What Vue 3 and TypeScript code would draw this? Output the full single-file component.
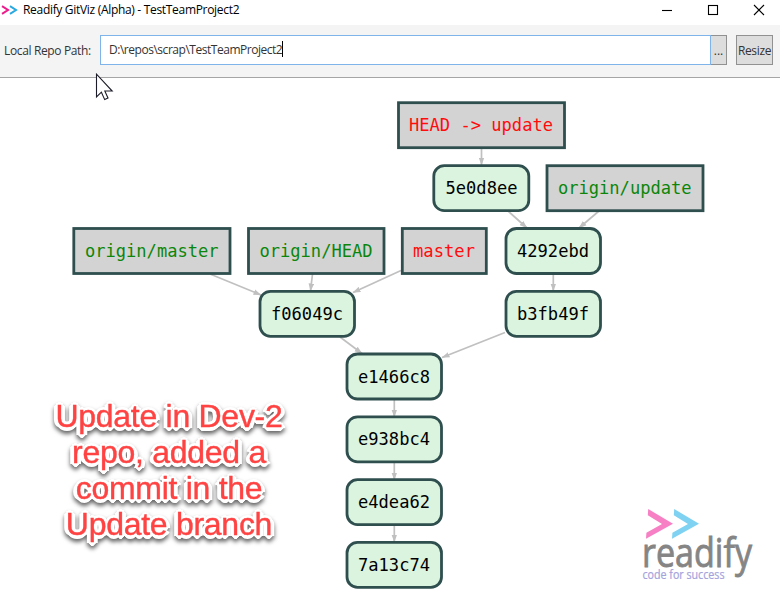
<script setup lang="ts">
type Kind = 'commit' | 'local' | 'remote'

interface GraphNode {
  label: string
  kind: Kind
  x: number
  y: number
  w: number
  textX: number
  textW: number
}

interface Edge {
  x1: number
  y1: number
  x2: number
  y2: number
}

const NODE_H = 45

const nodes: GraphNode[] = [
  { label: 'HEAD -> update', kind: 'local', x: 398.5, y: 102.7, w: 166, textX: 409, textW: 144 },
  { label: '5e0d8ee', kind: 'commit', x: 433.8, y: 165.7, w: 95, textX: 445.5, textW: 72 },
  { label: 'origin/update', kind: 'remote', x: 547, y: 165.7, w: 156, textX: 558, textW: 133.5 },
  { label: 'origin/master', kind: 'remote', x: 73.8, y: 228.5, w: 156.2, textX: 85, textW: 133.5 },
  { label: 'origin/HEAD', kind: 'remote', x: 248.5, y: 228.5, w: 135.5, textX: 259.5, textW: 113 },
  { label: 'master', kind: 'local', x: 402.3, y: 228.5, w: 84, textX: 413, textW: 62 },
  { label: '4292ebd', kind: 'commit', x: 506, y: 228.5, w: 94.5, textX: 517, textW: 72 },
  { label: 'f06049c', kind: 'commit', x: 260, y: 291.3, w: 94.5, textX: 271, textW: 72 },
  { label: 'b3fb49f', kind: 'commit', x: 506, y: 291.3, w: 94.5, textX: 517, textW: 72 },
  { label: 'e1466c8', kind: 'commit', x: 347, y: 354, w: 94.5, textX: 358, textW: 72 },
  { label: 'e938bc4', kind: 'commit', x: 347, y: 416.8, w: 94.5, textX: 358, textW: 72 },
  { label: 'e4dea62', kind: 'commit', x: 347, y: 479.6, w: 94.5, textX: 358, textW: 72 },
  { label: '7a13c74', kind: 'commit', x: 347, y: 542.4, w: 94.5, textX: 358, textW: 72 },
]

const edges: Edge[] = [
  { x1: 481.5, y1: 148, x2: 481.5, y2: 165 },
  { x1: 508, y1: 211, x2: 527, y2: 228 },
  { x1: 599, y1: 211, x2: 579, y2: 228 },
  { x1: 553.3, y1: 274, x2: 553.3, y2: 291 },
  { x1: 210, y1: 274, x2: 261, y2: 295 },
  { x1: 312.5, y1: 274, x2: 310.5, y2: 291 },
  { x1: 401, y1: 270.5, x2: 353, y2: 292.5 },
  { x1: 340, y1: 337, x2: 362, y2: 353.5 },
  { x1: 505, y1: 332.5, x2: 442, y2: 357.5 },
  { x1: 394.3, y1: 399, x2: 394.3, y2: 417 },
  { x1: 394.3, y1: 462, x2: 394.3, y2: 480 },
  { x1: 394.3, y1: 525, x2: 394.3, y2: 542 },
]

const noteLines: string[] = ['Update in Dev-2', 'repo, added a', 'commit in the', 'Update branch']
</script>

<template>
  <div class="window">
    <header class="titlebar">
      <svg class="app-icon" width="17" height="10" viewBox="0 0 17 10">
        <path d="M1 1.2 7 5 1 8.8" fill="none" stroke="#ec1c8c" stroke-width="2" />
        <path d="M9 1.2 15 5 9 8.8" fill="none" stroke="#29a9df" stroke-width="2" />
      </svg>
      <span class="title">Readify GitViz (Alpha) - TestTeamProject2</span>
      <div class="controls">
        <svg width="12" height="12" viewBox="0 0 12 12"><path d="M1 6.5H11" /></svg>
        <svg width="12" height="12" viewBox="0 0 12 12"><rect x="1.5" y="1.5" width="9" height="9" /></svg>
        <svg width="12" height="12" viewBox="0 0 12 12"><path d="M1 1 11 11M11 1 1 11" /></svg>
      </div>
    </header>

    <div class="toolbar">
      <label class="path-label">Local Repo Path:</label>
      <div class="path-box"><span class="path-text">D:\repos\scrap\TestTeamProject2</span><i class="caret"></i></div>
      <button class="browse">...</button>
      <button class="resize">Resize</button>
    </div>

    <main class="canvas">
      <svg class="graph" width="780" height="531" viewBox="0 78 780 531">
        <defs>
          <marker id="arrow" viewBox="0 0 8 6" refX="7.5" refY="3" markerWidth="8" markerHeight="6" markerUnits="userSpaceOnUse" orient="auto">
            <path d="M0 0.2 8 3 0 5.8Z" fill="#c0c0c0" />
          </marker>
        </defs>
        <line v-for="(e, i) in edges" :key="i" class="edge" v-bind="e" marker-end="url(#arrow)" />
        <g v-for="n in nodes" :key="n.label" :class="['node', n.kind]">
          <rect :x="n.x" :y="n.y" :width="n.w" :height="NODE_H" :rx="n.kind === 'commit' ? 10.5 : 0" />
          <text :x="n.textX" :y="n.y + 28.6" :textLength="n.textW" lengthAdjust="spacingAndGlyphs">{{ n.label }}</text>
        </g>
        <g class="logo">
          <path d="M648.2 509 673 523.8 646 538.8 646.4 532.7 662 524 647.8 515.2Z" fill="#f780c4" />
          <path d="M674.2 509 699 523.8 672 538.8 672.4 532.7 688 524 673.8 515.2Z" fill="#7fd2f2" />
          <text class="brand" x="642" y="566.5" textLength="110" lengthAdjust="spacingAndGlyphs">readify</text>
          <text class="tagline" x="642.5" y="579" textLength="82" lengthAdjust="spacingAndGlyphs">code for success</text>
        </g>
      </svg>
      <p class="note"><span v-for="line in noteLines" :key="line">{{ line }}</span></p>
    </main>

    <svg class="cursor" width="19" height="29" viewBox="0 0 19 29">
      <path d="M1.5 1.2V24L6.4 19.2 9.7 26.6 13 25.1 9.8 18H17.2Z" fill="#fff" stroke="#1c1c28" stroke-width="1.1" />
    </svg>
  </div>
</template>

<style>
body {
  margin: 0;
  background: #fff;
}
</style>

<style scoped>
.window {
  position: relative;
  width: 780px;
  height: 609px;
  overflow: hidden;
  display: flex;
  flex-direction: column;
  background: #fff;
  font-family: "Open Sans", "Noto Sans", sans-serif;
  font-size: 12px;
  color: #333;
}
.titlebar {
  height: 25px;
  flex: none;
  display: flex;
  align-items: flex-start;
  box-sizing: border-box;
  padding-left: 1px;
}
.app-icon {
  margin-top: 5px;
}
.title {
  margin-left: 5px;
  line-height: 20px;
  color: #000;
  white-space: nowrap;
  letter-spacing: -0.31px;
}
.controls {
  margin: 4px 15px 0 auto;
  display: flex;
  gap: 34px;
}
.controls svg {
  fill: none;
  stroke: #000;
  stroke-width: 1.1;
}
.toolbar {
  height: 53px;
  flex: none;
  box-sizing: border-box;
  display: flex;
  align-items: flex-start;
  padding: 10px 7px 0 4px;
  background: #f4f4f4;
  border-bottom: 1px solid #a5a5a5;
}
.path-label {
  width: 96px;
  line-height: 31px;
  white-space: nowrap;
  letter-spacing: -0.36px;
}
.path-box {
  width: 611px;
  height: 30px;
  box-sizing: border-box;
  border: 1px solid #7eb4ea;
  background: #fff;
  padding-left: 8px;
  display: flex;
  align-items: center;
}
.path-text {
  letter-spacing: -0.47px;
  line-height: 28px;
  height: 28px;
}
.caret {
  width: 1px;
  height: 16px;
  margin-top: -2px;
  background: #000;
}
button {
  height: 30px;
  box-sizing: border-box;
  padding: 0;
  border: 1px solid #919191;
  background: #ddd;
  font: inherit;
  color: #333;
}
.browse {
  width: 16px;
  border-left: 0;
}
.resize {
  width: 37px;
  margin-left: 9px;
  letter-spacing: -0.35px;
}
.canvas {
  flex: 1;
  position: relative;
}
.graph {
  display: block;
}
.edge {
  stroke: #c0c0c0;
  stroke-width: 1.7;
}
.node rect {
  stroke: #2f4f4f;
  stroke-width: 2.8;
  fill: #d3d3d3;
}
.node text {
  font-family: "DejaVu Sans Mono", monospace;
  font-size: 17.2px;
  fill: #000;
}
.commit rect {
  fill: #dbf4df;
}
.node.local text {
  fill: #ff0c0c;
}
.node.remote text {
  fill: #0b860b;
}
.logo .brand {
  font: 41px "Open Sans", sans-serif;
  fill: #858585;
  stroke: #858585;
  stroke-width: 0.9px;
}
.logo .tagline {
  font: 11.8px "Open Sans", sans-serif;
  fill: #a3a2dc;
  stroke: #a3a2dc;
  stroke-width: 0.2px;
}
.note {
  position: absolute;
  left: 49px;
  top: 320px;
  width: 240px;
  margin: 0;
  display: flex;
  flex-direction: column;
  align-items: center;
  font: 32px/36px "Liberation Sans", Arial, sans-serif;
  letter-spacing: -0.28px;
  color: #ff4242;
  -webkit-text-stroke: 0.4px #ff4242;
  filter: drop-shadow(0 3px 2px rgba(0, 0, 0, 0.6));
}
.note span {
  white-space: nowrap;
  text-shadow: 3px 0 #fff, -3px 0 #fff, 0 3px #fff, 0 -3px #fff, 2px 2px #fff, -2px 2px #fff, 2px -2px #fff,
    -2px -2px #fff, 3px 1px #fff, -3px 1px #fff, 1px 3px #fff, -1px 3px #fff, 4px 1px #fff, -4px 1px #fff, 0 4px #fff;
}
.cursor {
  position: absolute;
  left: 95px;
  top: 73px;
}
</style>
